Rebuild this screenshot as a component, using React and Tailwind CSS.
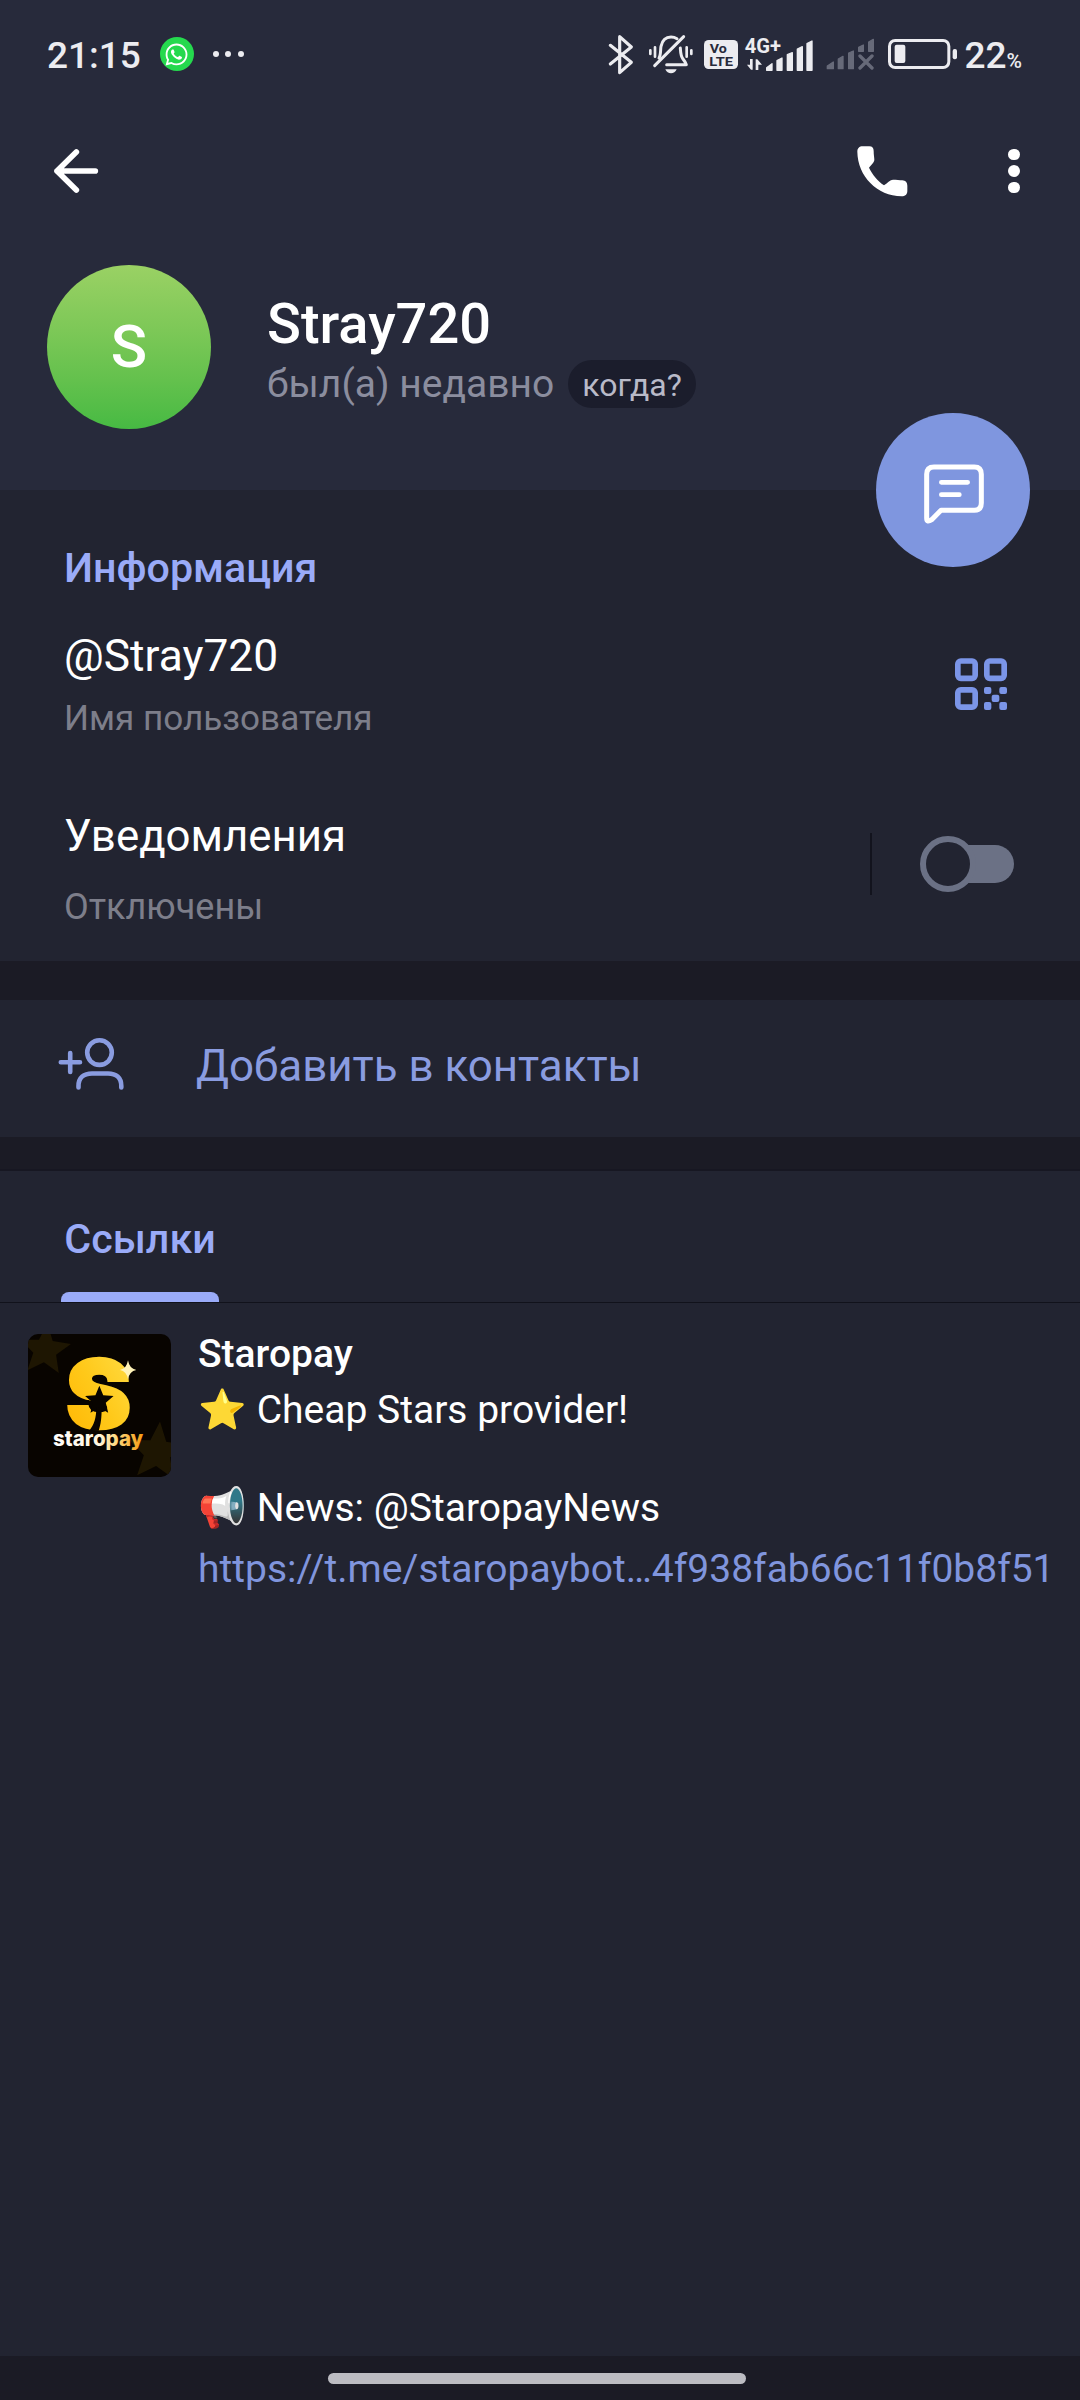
import { FaWhatsapp } from 'react-icons/fa';

const LINK = {
  title: 'Staropay',
  text: '⭐ Cheap Stars provider!\n\n📢 News: @StaropayNews',
  url: 'https://t.me/staropaybot…4f938fab66c11f0b8f51',
};

function BluetoothIcon() {
  return (
    <svg className="ml-auto h-[41px] w-[26px]" viewBox="55 39 78 123" fill="none" stroke="currentColor" strokeWidth="9.5" strokeLinecap="round" strokeLinejoin="round">
      <path d="M62 73 L125 124 L90 155 V47 L125 78 L62 129" />
    </svg>
  );
}

function MutedBellIcon() {
  return (
    <svg className="ml-3.5 h-10 w-[46px]" viewBox="174 44 138 120" fill="none" stroke="currentColor" strokeLinecap="round">
      <path d="M207 116 C213 107 211 92 213 81 C217 62 229 53 243 53 C250 53 256 55 261 58" strokeWidth="9" />
      <path d="M271 86 C272 102 272 110 279 119 C283 124 287 130 289 136 H230" strokeWidth="9" strokeLinejoin="round" />
      <path d="M194 139 L281 52" strokeWidth="9" />
      <path d="M226 150 H260 C257 158 250 162 243 162 C236 162 229 158 226 150 Z" fill="currentColor" stroke="none" />
      <path d="M181 93 V104 M195 84 V112 M290 84 V112 M304 93 V104" strokeWidth="8" />
    </svg>
  );
}

function VolteIcon() {
  return (
    <svg className="ml-2.5 h-[29px] w-[34px]" viewBox="342 60 102 87">
      <rect x="342" y="60" width="102" height="87" rx="14" fill="#ececf0" />
      <g fill="#272a3b" className="font-[Roboto] font-bold">
        <text x="359" y="99" fontSize="36" textLength="51" lengthAdjust="spacingAndGlyphs">Vo</text>
        <text x="358" y="138" fontSize="38" textLength="71" lengthAdjust="spacingAndGlyphs">LTE</text>
      </g>
    </svg>
  );
}

function SignalIcon() {
  return (
    <svg className="ml-1.5 h-[35px] w-[70px] overflow-visible" viewBox="464 48 210 105" fill="currentColor">
      <text x="466" y="95" fontSize="58" textLength="109" lengthAdjust="spacingAndGlyphs" className="font-[Roboto] font-bold">4G+</text>
      <path d="M490 114 V146 H485 L473 131 H482 V114 Z M499 147 V115 H504 L518 131 H507 V147 Z" />
      <g stroke="currentColor" strokeWidth="4" strokeLinejoin="round">
        <path d="M532 140 L548 128 V148 H532 Z" />
        <path d="M563 119 L578 111 V148 H563 Z" />
        <path d="M594 101 L609 95 V148 H594 Z" />
        <path d="M624 84 L639 77 V148 H624 Z" />
        <path d="M653 68 L668 60 V148 H653 Z" />
      </g>
    </svg>
  );
}

function NoSimIcon() {
  return (
    <svg className="ml-3 h-[32px] w-[49px] text-[#676a79]" viewBox="17 56 147 96" fill="currentColor">
      <g stroke="currentColor" strokeWidth="4" strokeLinejoin="round">
        <path d="M21 140 L39 128 V148 H21 Z" />
        <path d="M54 119 L68 111 V148 H54 Z" />
        <path d="M85 101 L99 95 V148 H85 Z" />
        <path d="M115 84 L129 77 V96 H115 Z" />
        <path d="M145 68 L159 60 V96 H145 Z" />
      </g>
      <path d="M119 110 L155 146 M155 110 L119 146" stroke="currentColor" strokeWidth="10" strokeLinecap="round" />
    </svg>
  );
}

function BatteryIcon() {
  return (
    <svg className="ml-[13px] h-[30px] w-[69px]" viewBox="204 57 207 90">
      <rect x="208.5" y="61.5" width="178" height="81" rx="17" fill="none" stroke="currentColor" strokeWidth="9" />
      <rect x="224" y="74" width="32" height="55" rx="6" fill="currentColor" />
      <rect x="398" y="87" width="13" height="31" rx="6" fill="currentColor" />
    </svg>
  );
}

function StatusBar() {
  return (
    <div className="flex h-[108px] items-center pr-[58px] pl-[47px] text-[#ececf0]">
      <span className="mt-[3px] text-[37px] leading-none font-medium">21:15</span>
      <span className="ml-[19px] flex size-[34px] items-center justify-center rounded-full bg-[#25d94e] text-white">
        <FaWhatsapp className="size-[25px]" />
      </span>
      <span className="ml-[19px] flex gap-[6.4px]">
        <i className="size-[6px] rounded-full bg-current" />
        <i className="size-[6px] rounded-full bg-current" />
        <i className="size-[6px] rounded-full bg-current" />
      </span>

      <BluetoothIcon />
      <MutedBellIcon />
      <VolteIcon />
      <SignalIcon />
      <NoSimIcon />
      <BatteryIcon />
      <span className="mt-[3px] ml-[7px] text-[37px] leading-none font-medium">22</span>
      <span className="mt-3.5 text-[21px] leading-none font-medium">%</span>
    </div>
  );
}

function Toolbar() {
  return (
    <div className="flex h-[126px] items-center pr-[60px] pl-[53px] text-white">
      <svg className="size-[46px]" viewBox="159 444 138 138" fill="none" stroke="currentColor" strokeWidth="17" strokeLinecap="round" strokeLinejoin="round">
        <path d="M229 456 L171 513 L229 570 M171 513 H286" />
      </svg>
      <svg className="ml-auto size-[51px]" viewBox="110 77 153 153" fill="currentColor">
        <path d="M127 78 H147 C156 78 160 84 160 92 C160 104 162 112 162 118 C162 125 152 135 146 142 C156 162 172 182 191 195 C200 189 210 178 218 178 C228 178 238 180 246 180 C256 181 261 186 261 196 V212 C261 222 254 228 244 228 C170 226 112 168 111 94 C111 84 117 78 127 78 Z" />
      </svg>
      <div className="ml-[100px] flex flex-col gap-[5px]">
        <i className="size-[11.6px] rounded-full bg-white" />
        <i className="size-[11.6px] rounded-full bg-white" />
        <i className="size-[11.6px] rounded-full bg-white" />
      </div>
    </div>
  );
}

function ProfileHeader() {
  return (
    <header className="relative h-[490px] bg-[#272a3b]">
      <StatusBar />
      <Toolbar />
      <div className="flex items-start px-[47px] pt-[31px]">
        <div className="flex size-[164px] items-center justify-center rounded-full bg-linear-to-b from-[#9ad164] to-[#46ba43] text-[60px] font-medium text-white">
          S
        </div>
        <div className="pt-[27px] pl-14">
          <h1 className="h-16 text-[56px] leading-[64px] font-medium text-white">Stray720</h1>
          <div className="mt-1 flex h-12 items-center gap-3.5">
            <span className="text-[39px] leading-[48px] text-[#8b8d9e]">был(а) недавно</span>
            <span className="h-12 rounded-full bg-[#1b1d2c] px-[14px] text-[32px] leading-[50px] text-[#b9bac8]">когда?</span>
          </div>
        </div>
      </div>

      {/* floating message button over the header edge */}
      <button className="absolute right-[50px] -bottom-[77px] flex size-[154px] items-center justify-center rounded-full bg-[#7f96df]">
        <svg className="mt-[7px] ml-0.5 size-[60px]" viewBox="252 221 180 180" fill="none" stroke="#fff" strokeWidth="15" strokeLinecap="round" strokeLinejoin="round">
          <path d="M260 384 V252 Q260 230 282 230 H403 Q424 230 424 252 V338 Q424 360 403 360 H303 L275 388 Q260 398 260 384 Z" />
          <path d="M304 276 H383 M304 313 H358" strokeWidth="14" />
        </svg>
      </button>
    </header>
  );
}

function QrIcon() {
  return (
    <svg className="mb-0.5 size-[52px] text-[#7b95e8]" viewBox="345 84 156 156">
      <g fill="none" stroke="currentColor" strokeWidth="17">
        <rect x="353.5" y="93" width="52" height="52" rx="9" />
        <rect x="440.5" y="93" width="52" height="52" rx="9" />
        <rect x="353.5" y="179.5" width="52" height="52" rx="9" />
      </g>
      <g fill="currentColor">
        <rect x="432" y="171" width="22" height="21" rx="6" />
        <rect x="478" y="171" width="23" height="21" rx="6" />
        <rect x="455" y="194" width="23" height="22" rx="6" />
        <rect x="432" y="216" width="22" height="24" rx="6" />
        <rect x="478" y="216" width="23" height="24" rx="6" />
      </g>
    </svg>
  );
}

function Info() {
  return (
    <section className="h-[471px] bg-[#222431] pt-12 pl-16">
      <h2 className="h-[60px] text-[41.2px] leading-[60px] font-medium text-[#9aabf8]">Информация</h2>

      <div className="mt-7 flex h-[117px] items-center justify-between pr-[73px]">
        <div>
          <div className="h-[60px] text-[44.3px] leading-[60px] text-white">@Stray720</div>
          <div className="mt-[7px] h-[50px] text-[35.1px] leading-[50px] text-[#7d7e8a]">Имя пользователя</div>
        </div>
        <QrIcon />
      </div>

      <div className="mt-[63px] flex h-[126px] items-start pr-[66px]">
        <div>
          <div className="h-[60px] text-[43.8px] leading-[60px] text-white">Уведомления</div>
          <div className="mt-4 h-[50px] text-[36px] leading-[50px] text-[#7d7e8a]">Отключены</div>
        </div>
        <div className="mt-[27px] ml-auto h-[62px] w-0.5 bg-[#12131d]" />
        <div className="mt-[30px] ml-12 flex items-center">
          <span className="z-10 size-14 rounded-full border-[6px] border-[#6b7185] bg-[#222431]" />
          <span className="-ml-7 h-[38px] w-[66px] rounded-r-full bg-[#6b7185]" />
        </div>
      </div>
    </section>
  );
}

function AddContact() {
  return (
    <button className="flex h-[137px] w-full items-start bg-[#222431] pt-9 pl-[58px] text-[#8a9ce0]">
      <svg className="h-[54px] w-[66px]" viewBox="58 1036 66 54" fill="none" stroke="currentColor" strokeWidth="4.6" strokeLinecap="round">
        <path d="M60.8 1062.3 H80 M70.2 1053 V1072" />
        <circle cx="99.5" cy="1052.6" r="12.3" />
        <path d="M78.5 1087.5 V1086 C78.5 1077.5 84 1073.5 92 1073.5 H108 C116 1073.5 121.3 1077.5 121.3 1086 V1087.5" />
      </svg>
      <span className="ml-[72px] text-[43.9px] leading-[60px]">Добавить в контакты</span>
    </button>
  );
}

// five-pointed star centred on 0,0 with radius 1
const STAR = 'M0 -1 L.26 -.36 L.95 -.31 L.43 .14 L.59 .81 L0 .46 L-.59 .81 L-.43 .14 L-.95 -.31 L-.26 -.36 Z';

function Thumbnail() {
  return (
    <svg className="size-[143px] shrink-0 rounded-[10px]" viewBox="84 102 429 429">
      <defs>
        <linearGradient id="gold" x1="0" y1="1" x2="1" y2="0">
          <stop offset="0" stopColor="#ffb400" />
          <stop offset="0.5" stopColor="#ffc91a" />
          <stop offset="1" stopColor="#ffdf4a" />
        </linearGradient>
        <linearGradient id="pay" x1="0" x2="1">
          <stop offset="0" stopColor="#fff" />
          <stop offset="0.5" stopColor="#fff6e0" />
          <stop offset="0.68" stopColor="#ffdc86" />
          <stop offset="1" stopColor="#f59a10" />
        </linearGradient>
      </defs>
      <rect x="84" y="102" width="429" height="429" fill="#080400" />
      <path d={STAR} transform="translate(135 150) rotate(5) scale(80)" fill="#1e1602" />
      <path d={STAR} transform="translate(472 456) rotate(5) scale(92)" fill="#1e1602" />
      <text x="197" y="383" fontSize="286" textLength="196" lengthAdjust="spacingAndGlyphs" fill="url(#gold)" stroke="url(#gold)" strokeWidth="8" className="font-[Inter] font-black">S</text>
      <path d={STAR} transform="translate(298 302) scale(45)" fill="#080400" />
      <path d="M200 303 L268 300 V315 H200 Z" fill="#080400" />
      <path d="M289 322 H305 C305 352 303 372 296 392 H268 C282 374 289 354 289 322 Z" fill="#080400" />
      <path d="M384 181 Q388 206 409 210 Q388 214 384 238 Q380 214 360 210 Q380 206 384 181 Z" fill="#fff3b8" />
      <text x="159" y="438" fontSize="62" textLength="271" lengthAdjust="spacingAndGlyphs" fill="url(#pay)" className="font-[Inter] font-extrabold">staropay</text>
    </svg>
  );
}

function LinkItem({ title, text, url }) {
  return (
    <div className="flex pt-[31px] pl-7">
      <Thumbnail />
      <div className="-mt-1 ml-[27px] text-[39px] text-white">
        <div className="h-[49px] leading-[49px] font-medium">{title}</div>
        <div className="mt-[7px] leading-[49px] whitespace-pre-wrap">{text}</div>
        <div className="mt-3 leading-[49px] whitespace-nowrap text-[#8095dd]">{url}</div>
      </div>
    </div>
  );
}

export default function App() {
  return (
    <div className="flex h-[2400px] w-[1080px] flex-col overflow-hidden bg-[#1b1b25] font-[Roboto,sans-serif]">
      <ProfileHeader />
      <Info />
      <div className="h-[39px]" />
      <AddContact />
      <div className="h-[34px] border-b-2 border-[#171722]" />

      <main className="flex-1 bg-[#222431]">
        <div className="flex h-[132px] items-end border-b border-[#11121b] pl-[61px]">
          <div className="flex w-[158px] flex-col items-center">
            <span className="text-[41.2px] leading-[60px] font-medium text-[#9aabf8]">Ссылки</span>
            <span className="mt-[23px] h-[10px] w-full rounded-t-lg bg-[#9aabf8]" />
          </div>
        </div>
        <LinkItem {...LINK} />
      </main>

      <div className="flex h-11 items-start justify-center pt-[17px] pr-1.5">
        <div className="h-[11px] w-[418px] rounded-full bg-[#bcbcc2]" />
      </div>
    </div>
  );
}
